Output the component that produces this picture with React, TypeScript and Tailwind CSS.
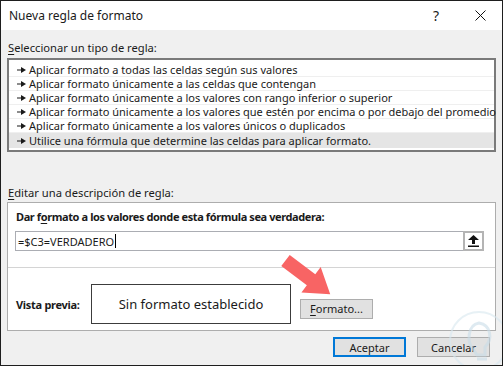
import React from "react";

const font = { fontFamily: '"Noto Sans", "Open Sans", sans-serif' };

function RowArrow() {
  return (
    <svg width="9" height="6" viewBox="0 0 9 6" className="shrink-0">
      <rect x="0" y="2.5" width="5" height="1" fill="#1a1a1a" />
      <polygon points="4,0 9,3 4,6" fill="#1a1a1a" />
    </svg>
  );
}

const rules = [
  "Aplicar formato a todas las celdas según sus valores",
  "Aplicar formato únicamente a las celdas que contengan",
  "Aplicar formato únicamente a los valores con rango inferior o superior",
  "Aplicar formato únicamente a los valores que estén por encima o por debajo del promedio",
  "Aplicar formato únicamente a los valores únicos o duplicados",
  "Utilice una fórmula que determine las celdas para aplicar formato.",
];

export default function App() {
  return (
    <div
      className="relative w-[503px] h-[366px] overflow-hidden border border-[#1e1e1e] bg-[#f0f0f0] text-[11px] text-[#1a1a1a] flex flex-col"
      style={font}
    >
      {/* Title bar */}
      <div className="h-[29px] bg-white flex items-center shrink-0">
        <span className="pl-[8px] text-[12px] leading-none">Nueva regla de formato</span>
        <span className="ml-auto mr-[36px] text-[14px] leading-none">?</span>
        <svg width="11" height="11" viewBox="0 0 11 11" className="mr-[16px]">
          <path d="M0.5 0.5 L10.5 10.5 M10.5 0.5 L0.5 10.5" stroke="#111" strokeWidth="1" />
        </svg>
      </div>

      {/* Body */}
      <div className="flex-1 flex flex-col px-[6px]">
        <div className="mt-[10px] h-[16px] leading-[16px] pl-[1px] text-[11.2px]">
          <span className="underline underline-offset-2">S</span>eleccionar un tipo de regla:
        </div>
        <div className="mt-[2px] h-[94px] border-2 border-[#7a7a7a] bg-white pt-[3px] flex flex-col">
          {rules.map((r, i) => (
            <div
              key={i}
              className={
                i === rules.length - 1
                  ? "h-[15px] flex items-center gap-[3px] pl-[8px] bg-[#e5e5e5] whitespace-nowrap leading-[14px]"
                  : "h-[14px] flex items-center gap-[3px] pl-[8px] border-b border-[#efefef] whitespace-nowrap leading-[13px]"
              }
            >
              <RowArrow />
              <span>{r}</span>
            </div>
          ))}
        </div>

        <div className="mt-[33px] h-[16px] leading-[16px] pl-[1px] text-[11.2px]">
          <span className="underline underline-offset-2">E</span>ditar una descripción de regla:
        </div>
        <div className="mt-[1px] h-[129px] border border-[#adadad] bg-white flex flex-col">
          <div className="pt-[6px] pl-[8px] h-[22px] leading-[16px] font-bold whitespace-nowrap tracking-[-0.4px]">
            Dar f<span className="underline underline-offset-2">o</span>rmato a los valores donde esta fórmula sea verdadera:
          </div>
          <div className="mt-[6px] ml-[7px] flex items-center">
            <div className="w-[448px] h-[20px] border border-[#abadb3] border-r-0 flex items-center pl-[2px] leading-none">
              =$C3=VERDADERO
              <span className="inline-block w-px h-[14px] bg-black ml-px" />
            </div>
            <div className="w-[21px] h-[20px] border-2 border-[#b4b4b4] bg-white flex items-center justify-center">
              <svg width="11" height="12" viewBox="0 0 11 12">
                <polygon points="5.5,0 11,5 7,5 7,9 4,9 4,5 0,5" fill="#111" />
                <rect x="0" y="10.5" width="11" height="1.5" fill="#111" />
              </svg>
            </div>
          </div>
          <div className="mt-[16px] h-px bg-[#d4d4d4]" />
          <div className="flex items-center pl-[8px] mt-[16px]">
            <span className="font-bold w-[75px] leading-none tracking-[-0.3px]">Vista previa:</span>
            <div className="w-[200px] h-[40px] border border-[#3c3c3c] flex items-center justify-center text-[13px] leading-none">
              Sin formato establecido
            </div>
            <button className="ml-[9px] mt-[9px] w-[73px] h-[20px] border border-[#adadad] bg-[#e1e1e1] flex items-center justify-center leading-none">
              <span className="underline underline-offset-2">F</span>ormato...
            </button>
          </div>
        </div>

        <div className="mt-[6px] flex justify-end pr-[6px] gap-[11px]">
          <button className="w-[73px] h-[20px] border-2 border-[#0078d7] bg-[#e1e1e1] flex items-center justify-center leading-none">
            Aceptar
          </button>
          <button className="w-[73px] h-[20px] border border-[#adadad] bg-[#e1e1e1] flex items-center justify-center leading-none">
            Cancelar
          </button>
        </div>
      </div>

      {/* Red arrow overlay */}
      <svg className="absolute left-0 top-0 pointer-events-none" width="503" height="366">
        <g transform="translate(284.5 259.5) rotate(37)">
          <polygon points="0,-7 32,-7 32,-16 56,0 32,16 32,7 0,7" fill="#f86464" />
        </g>
      </svg>

      {/* Watermark */}
      <svg className="absolute left-[446px] top-[308px] pointer-events-none opacity-60" width="60" height="60" viewBox="0 0 60 60">
        <circle cx="32" cy="32" r="29" fill="none" stroke="#d8e8f0" strokeWidth="2" />
        <path
          d="M26 40 C20 34 20 16 32 14 C44 16 46 30 38 38 L38 46 L30 46 Z"
          fill="none"
          stroke="#c9dde8"
          strokeWidth="3"
        />
        <path d="M30 50 L40 50" stroke="#c9dde8" strokeWidth="3" />
      </svg>
    </div>
  );
}
